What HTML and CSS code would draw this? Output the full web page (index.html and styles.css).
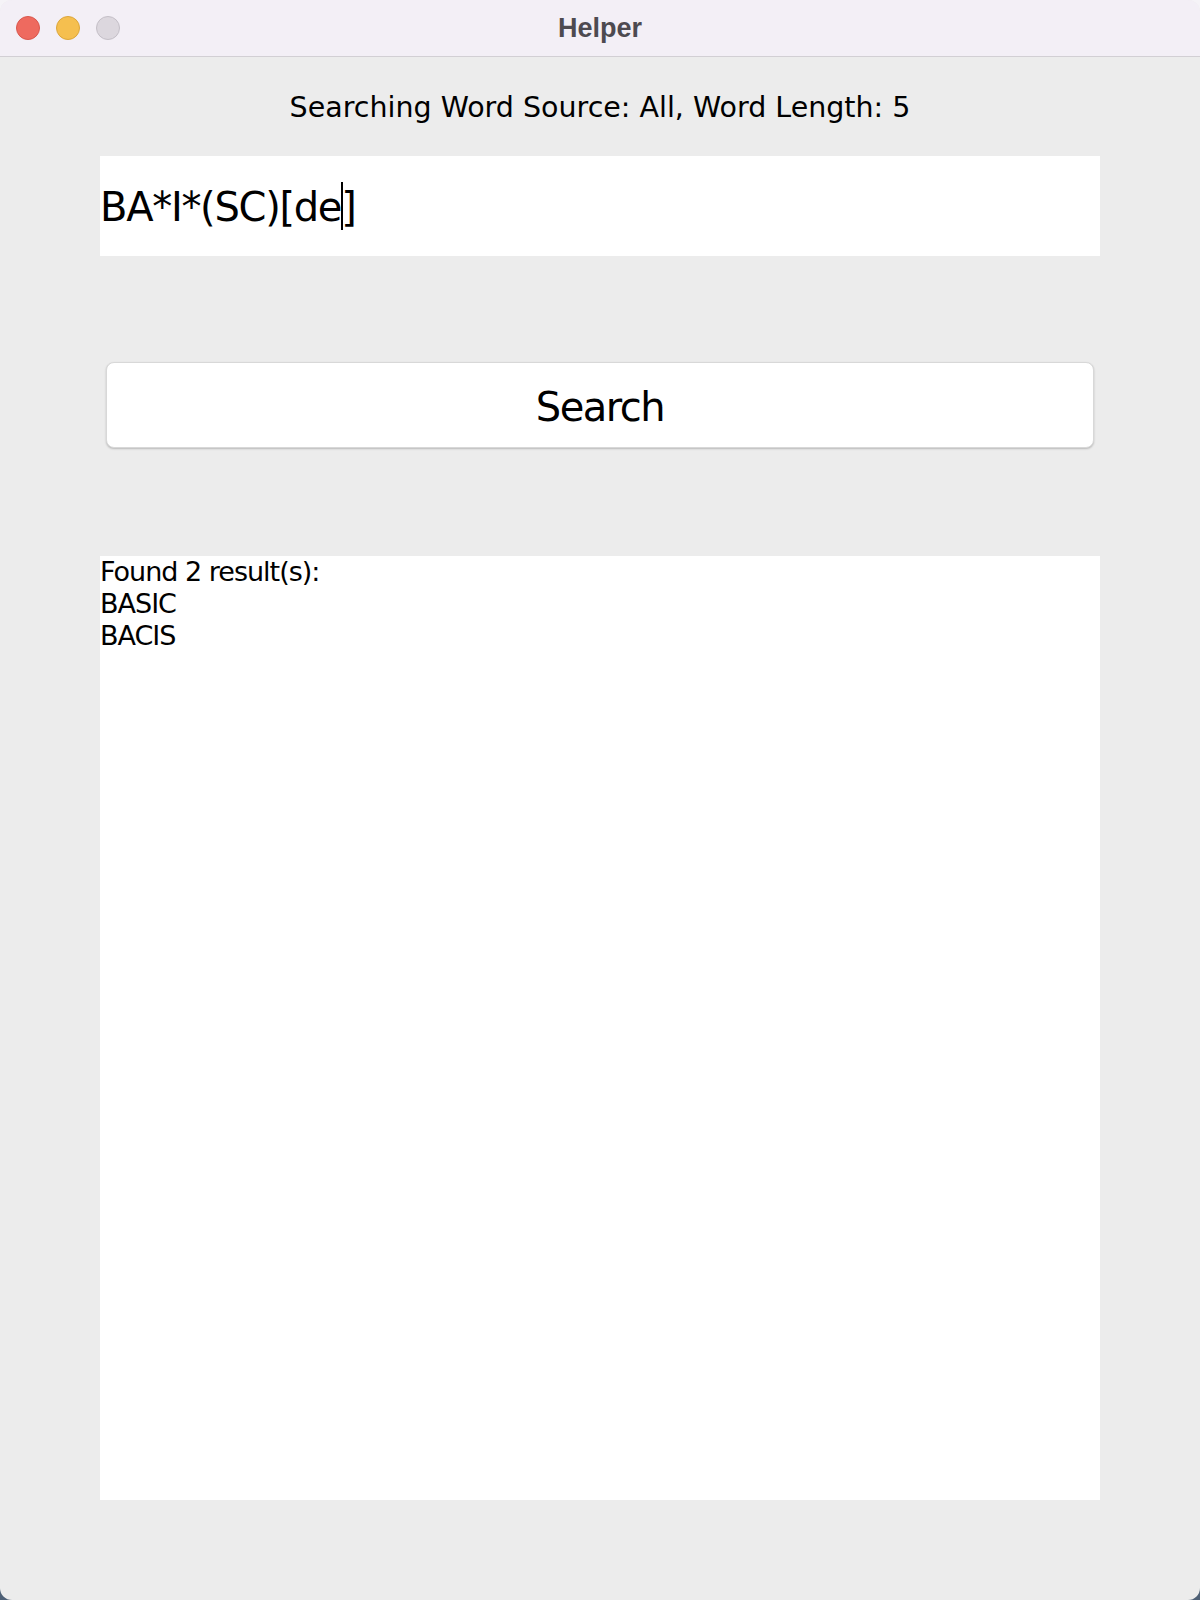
FILE: index.html
```html
<!DOCTYPE html>
<html lang="en">
<head>
<meta charset="utf-8">
<title>Helper</title>
<link rel="stylesheet" href="styles.css">
</head>
<body>
<div class="window">
  <header class="titlebar">
    <div class="lights">
      <span class="light red"></span>
      <span class="light yellow"></span>
      <span class="light gray"></span>
    </div>
    <div class="title">Helper</div>
    <div class="spacer"></div>
  </header>
  <main class="content">
    <h1 class="heading">Searching Word Source: All, Word Length: 5</h1>
    <div class="query"><span class="query-text">BA*I*(SC)[de<span class="caret"></span>]</span></div>
    <button class="search-btn" type="button">Search</button>
    <div class="results">
      <div class="line">Found 2 result(s):</div>
      <div class="line">BASIC</div>
      <div class="line">BACIS</div>
    </div>
  </main>
</div>
</body>
</html>
```
FILE: styles.css
```css
html, body {
  margin: 0;
  padding: 0;
}
body {
  width: 1200px;
  height: 1600px;
  background: linear-gradient(to bottom, #f5f3f7 0, #f5f3f7 50%, #4e6076 50%, #4e6076 100%);
}
.window {
  width: 1200px;
  height: 1600px;
  border-radius: 12px;
  overflow: hidden;
  background: #ececec;
  display: flex;
  flex-direction: column;
}
.titlebar {
  height: 57px;
  box-sizing: border-box;
  flex: none;
  border-bottom: 1px solid #d2cfd4;
  background: #f3eff6;
  display: grid;
  grid-template-columns: 1fr auto 1fr;
  align-items: center;
}
.lights {
  display: flex;
  gap: 16px;
  padding-left: 16px;
}
.light {
  width: 24px;
  height: 24px;
  border-radius: 50%;
  box-sizing: border-box;
}
.red {
  background: #ee6a5f;
  border: 1px solid #d9574d;
}
.yellow {
  background: #f5bf4f;
  border: 1px solid #dca63b;
}
.gray {
  background: #dcd7de;
  border: 1px solid #c4bfc7;
}
.title {
  font-family: "Liberation Sans", Arial, sans-serif;
  font-weight: bold;
  font-size: 27px;
  color: #4d4a50;
}
.content {
  flex: 1;
  padding: 0 100px;
  display: flex;
  flex-direction: column;
}
.heading {
  margin: 0;
  height: 99px;
  box-sizing: border-box;
  padding-top: 3px;
  line-height: 96px;
  font-family: "DejaVu Sans", sans-serif;
  font-weight: normal;
  font-size: 28.5px;
  color: #000;
  text-align: center;
}
.query {
  height: 100px;
  flex: none;
  background: #fff;
  display: flex;
  align-items: center;
}
.query-text {
  font-family: "DejaVu Sans", sans-serif;
  font-size: 40px;
  letter-spacing: -1.3px;
  color: #000;
  white-space: pre;
}
.caret {
  display: inline-block;
  width: 2px;
  height: 48px;
  margin-right: -2px;
  background: #000;
  vertical-align: -9px;
}
.search-btn {
  margin: 106px 6px 0;
  height: 86px;
  flex: none;
  box-sizing: border-box;
  padding: 4px 0 0;
  border: 1px solid #d8d8d8;
  border-radius: 8px;
  background: #fff;
  box-shadow: 0 1px 2px rgba(0, 0, 0, 0.22);
  font-family: "DejaVu Sans", sans-serif;
  font-size: 40px;
  letter-spacing: -1.5px;
  color: #000;
}
.results {
  margin-top: 108px;
  height: 944px;
  flex: none;
  background: #fff;
  font-family: "DejaVu Sans", sans-serif;
  font-size: 27px;
  letter-spacing: -1px;
  line-height: 32px;
  color: #000;
}
```
